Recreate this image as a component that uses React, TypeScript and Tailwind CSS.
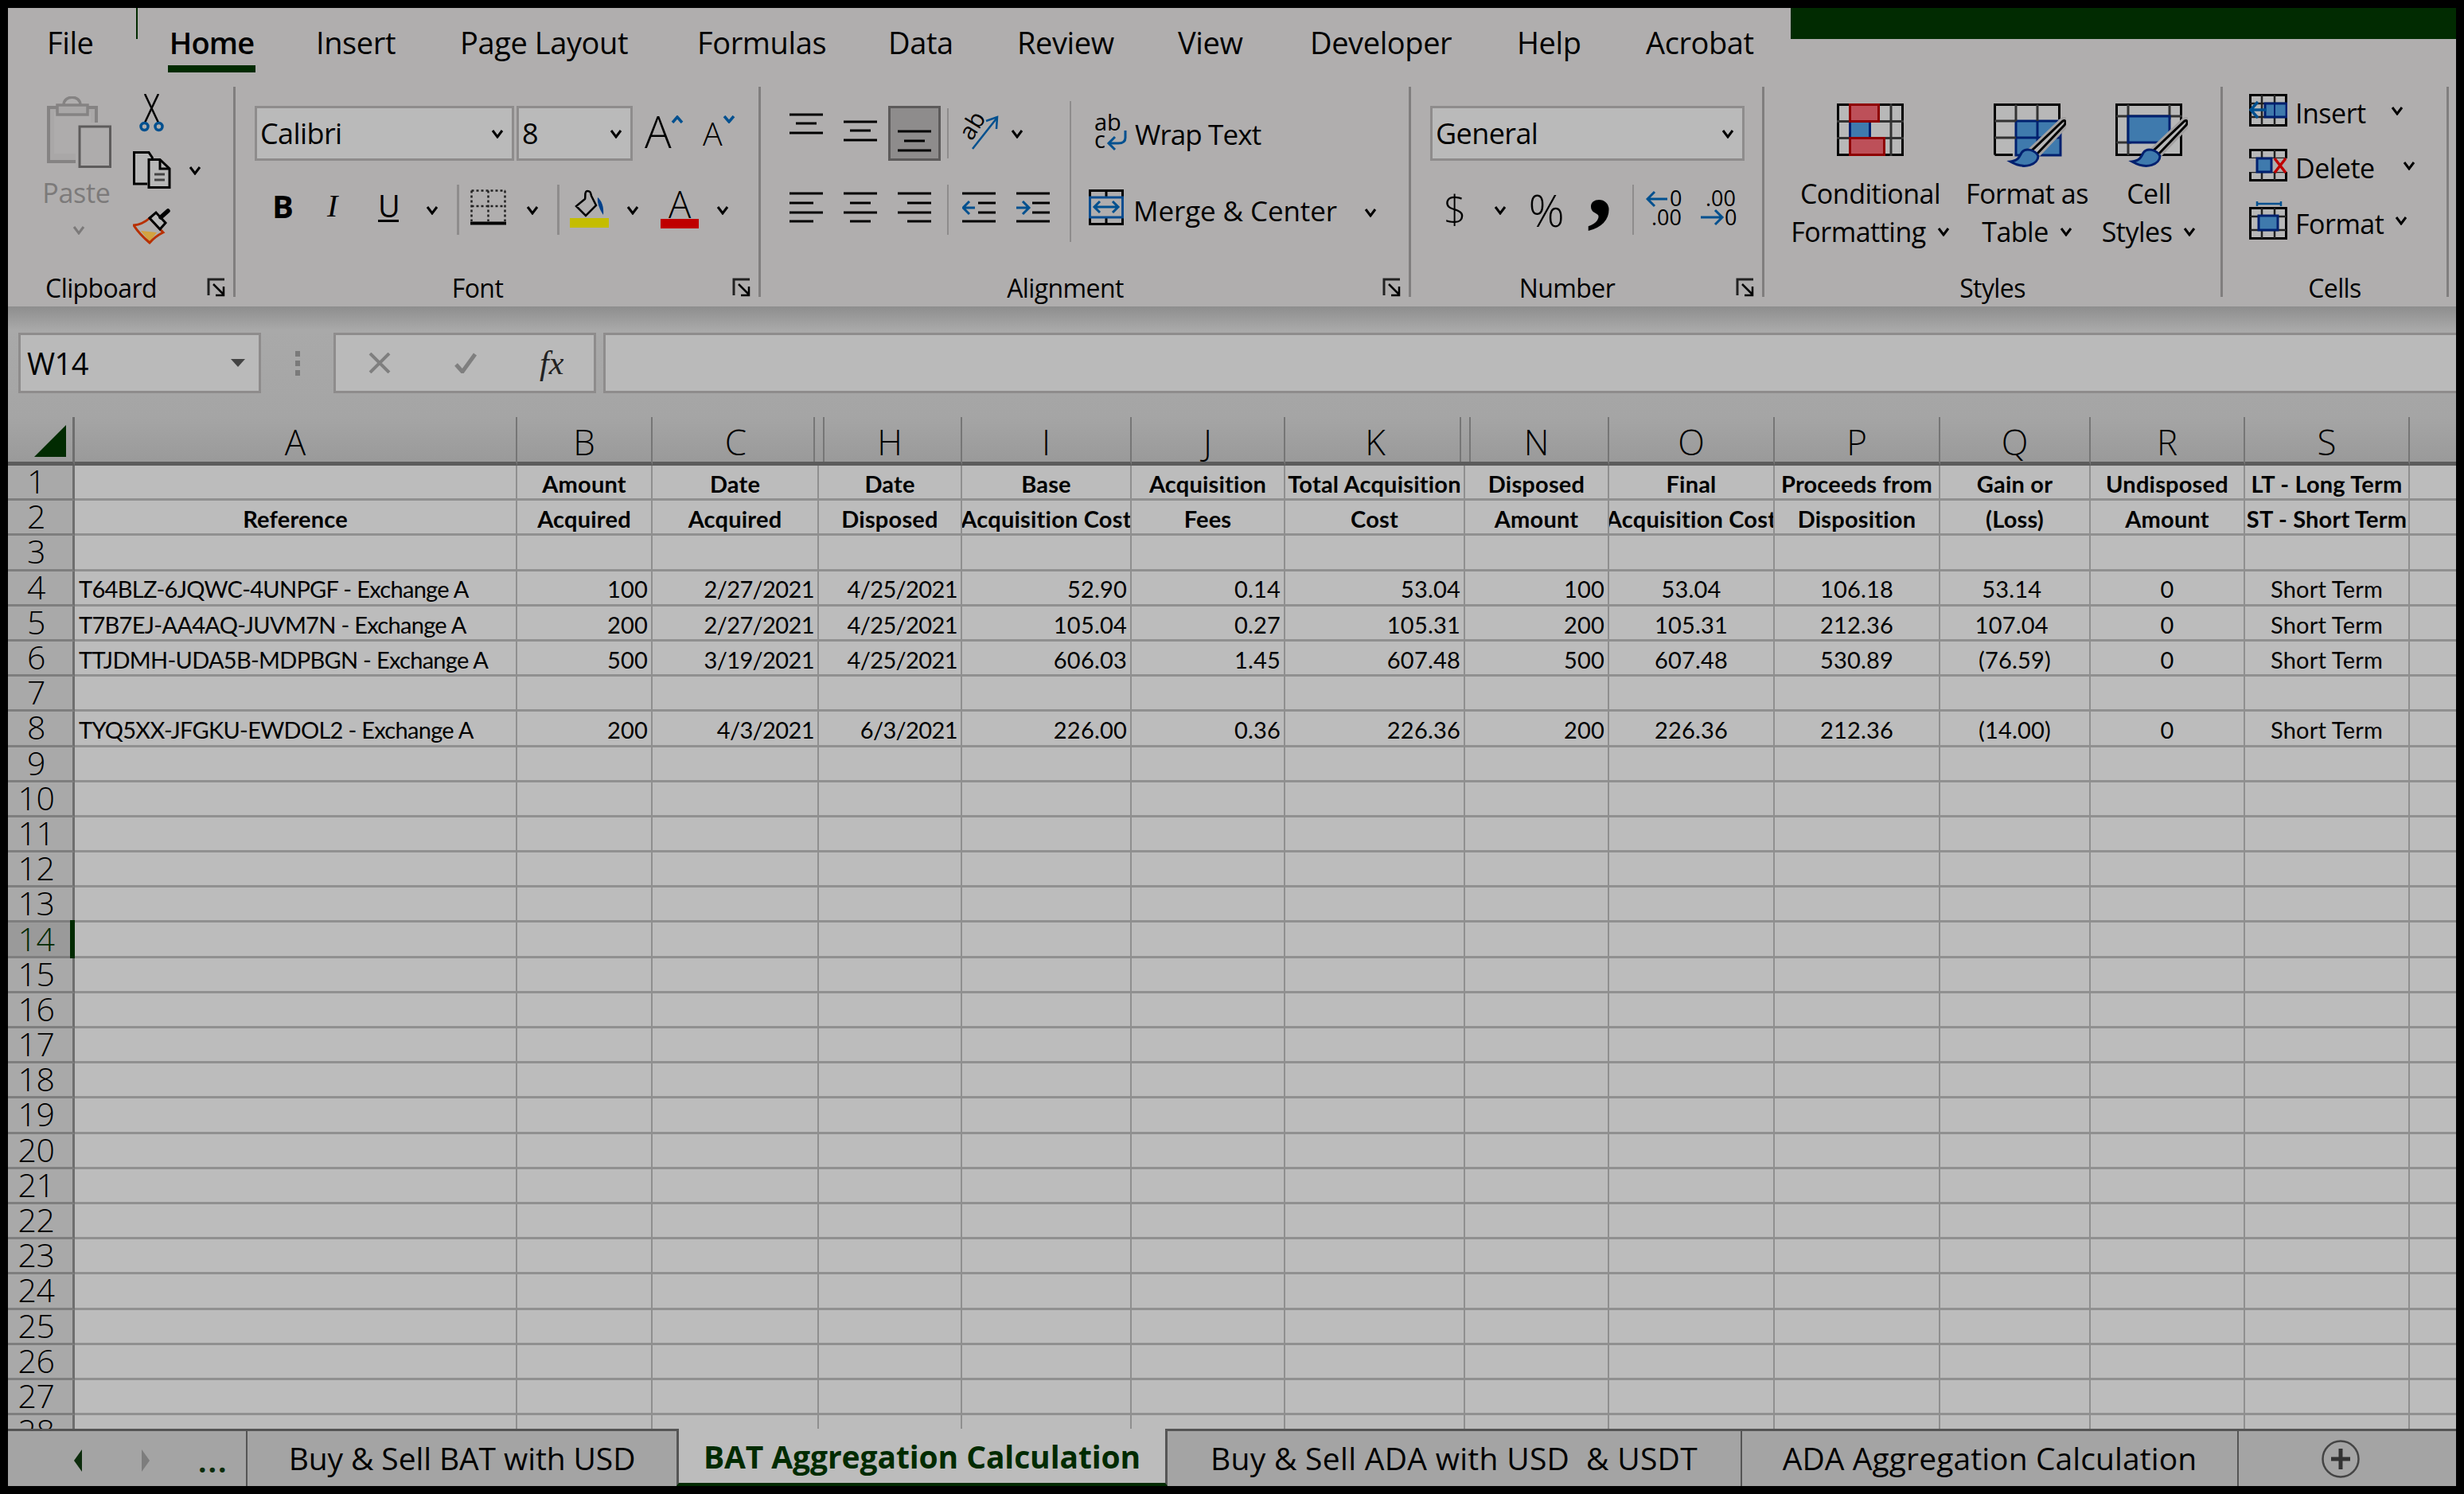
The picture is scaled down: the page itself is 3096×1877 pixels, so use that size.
import React from "react";

const ink = "#000";
const blue = "#00508f";
const navy = "#00206f";
const fillBlue = "#3f7aad";

function Chev({ color = "#000", className = "" }: { color?: string; className?: string }) {
  return (
    <svg width="16" height="12" viewBox="0 0 16 12" className={`shrink-0 ${className}`}>
      <path d="M2 2 L8 10 L14 2" fill="none" stroke={color} strokeWidth="3" />
    </svg>
  );
}

function Launcher() {
  return (
    <svg width="24" height="24" viewBox="0 0 24 24" className="shrink-0 mr-[9px] self-end">
      <path d="M2 22V2H22" fill="none" stroke="#222" strokeWidth="3" />
      <path d="M8 8L21 21M21 11V22H11" fill="none" stroke="#000" strokeWidth="2.5" />
    </svg>
  );
}

function Lines({ rows, color = ink, className = "" }: { rows: number[][]; color?: string; className?: string }) {
  return (
    <svg width="42" height="40" viewBox="0 0 42 40" className={`shrink-0 ${className}`}>
      {rows.map((r, i) => (
        <line key={i} x1={r[0]} x2={r[1]} y1={r[2]} y2={r[2]} stroke={color} strokeWidth="3" />
      ))}
    </svg>
  );
}

function PasteIcon() {
  return (
    <svg width="81" height="90" viewBox="0 0 81 90">
      <rect x="2" y="14" width="60" height="68" fill="#a9a7a7" stroke="#858383" strokeWidth="4" />
      <rect x="9" y="20" width="46" height="52" fill="#aeacac" />
      <path d="M21 11C21 -2 42 -2 42 11" fill="none" stroke="#858383" strokeWidth="3.5" />
      <rect x="13" y="11" width="38" height="12" fill="#a9a7a7" stroke="#858383" strokeWidth="3.5" />
      <rect x="36" y="33" width="45" height="57" fill="#aeacac" />
      <rect x="41" y="38" width="38.5" height="50.5" fill="#aeacac" stroke="#5e5c5c" strokeWidth="3" />
    </svg>
  );
}

function Scissors() {
  return (
    <svg width="31" height="48" viewBox="0 0 31 48">
      <path d="M7 0L24 36" stroke="#000" strokeWidth="2.5" />
      <path d="M24 0L7 36" stroke="#000" strokeWidth="2.5" />
      <circle cx="6.5" cy="41" r="4.5" fill="none" stroke={blue} strokeWidth="3.5" />
      <circle cx="24.5" cy="41" r="4.5" fill="none" stroke={blue} strokeWidth="3.5" />
    </svg>
  );
}

function CopyIcon() {
  return (
    <svg width="48" height="47" viewBox="0 0 48 47">
      <path d="M18 41H1.5V1.5H20L25 9" fill="#b8b8b8" stroke="#000" strokeWidth="3" />
      <path d="M20 10.5H34L46 22V45.5H20Z" fill="#b8b8b8" stroke="#000" strokeWidth="3" />
      <path d="M34 10V22H46" fill="none" stroke="#000" strokeWidth="3" />
      <path d="M27 29H40M27 36H40" stroke="#444" strokeWidth="3" />
    </svg>
  );
}

function PainterIcon() {
  return (
    <svg width="48" height="46" viewBox="0 0 48 46">
      <path d="M10 28L30 30L21 42Z" fill="#d3a23f" />
      <path d="M1 21Q12 20 21 12L38 30Q28 35 21 43Q8 32 1 21Z" fill="none" stroke="#b83000" strokeWidth="3" />
      <path d="M21 12L29 5L41 18L34 26Z" fill="#b8b8b8" stroke="#000" strokeWidth="3" />
      <path d="M35 11L44 3" stroke="#000" strokeWidth="5.5" strokeLinecap="round" />
    </svg>
  );
}

function BorderIcon() {
  return (
    <svg width="45" height="45" viewBox="0 0 45 45">
      <path d="M1.5 1.5H44M1.5 1.5V40M43.5 1.5V40M1.5 21H44M22.5 1.5V40" fill="none" stroke="#222" strokeWidth="2.5" strokeDasharray="3 3" />
      <path d="M0 42.5H45" stroke="#000" strokeWidth="4" />
    </svg>
  );
}

function FillIcon() {
  return (
    <svg width="49" height="48" viewBox="0 0 49 48">
      <path d="M22 2C18 2 20 8 19 12L8 21L20 33L33 20L27 8C26 4 26 2 22 2Z" fill="none" stroke="#000" strokeWidth="2.5" />
      <path d="M35 10C40 14 43 22 42 32C38 26 34 18 35 10Z" fill="#00408a" />
      <rect x="0" y="36" width="49" height="12" fill="#c4bd00" />
    </svg>
  );
}

function Orientation() {
  return (
    <svg width="50" height="46" viewBox="0 0 50 46" className="overflow-visible">
      <text x="15" y="35" fontSize="30" transform="rotate(-58 15 35)" fontFamily="Open Sans, sans-serif" fill="#000">ab</text>
      <path d="M16 44L46 6" stroke={blue} strokeWidth="2.5" />
      <path d="M33 9L47 4L46 19" fill="none" stroke={blue} strokeWidth="2.5" />
    </svg>
  );
}

function WrapIcon() {
  return (
    <svg width="42" height="47" viewBox="0 0 42 47">
      <text x="0" y="21" fontSize="29" fontFamily="Open Sans, sans-serif" fill="#000">ab</text>
      <text x="0" y="43" fontSize="29" fontFamily="Open Sans, sans-serif" fill="#000">c</text>
      <path d="M39 21V30Q39 37 30 37H19" fill="none" stroke={blue} strokeWidth="3" />
      <path d="M26 29L18 37L26 45" fill="none" stroke={blue} strokeWidth="3" />
    </svg>
  );
}

function MergeIcon() {
  return (
    <svg width="44" height="45" viewBox="0 0 44 45">
      <path d="M1.5 10V1.5H42.5V10M22 1.5V10M1.5 35V43.5H42.5V35M22 35V43.5" fill="none" stroke="#000" strokeWidth="3" />
      <rect x="1.5" y="10" width="41" height="25" fill="none" stroke="#0a4d90" strokeWidth="3" />
      <path d="M8 22H36M14 15L7 22L14 29M30 15L37 22L30 29" fill="none" stroke={blue} strokeWidth="3" />
    </svg>
  );
}

function DecimalUp() {
  return (
    <svg width="46" height="46" viewBox="0 0 46 46">
      <path d="M2 12H27M11 3L2 12L11 21" fill="none" stroke={blue} strokeWidth="3" />
      <text x="30" y="21" fontSize="27" fontFamily="Open Sans, sans-serif" fill="#000" textLength="15">0</text>
      <text x="7" y="45" fontSize="27" fontFamily="Open Sans, sans-serif" fill="#000" textLength="38">.00</text>
    </svg>
  );
}

function DecimalDown() {
  return (
    <svg width="46" height="46" viewBox="0 0 46 46">
      <text x="6" y="21" fontSize="27" fontFamily="Open Sans, sans-serif" fill="#000" textLength="38">.00</text>
      <path d="M0 35H27M18 26L27 35L18 44" fill="none" stroke={blue} strokeWidth="3" />
      <text x="30" y="45" fontSize="27" fontFamily="Open Sans, sans-serif" fill="#000" textLength="15">0</text>
    </svg>
  );
}

function CondIcon() {
  return (
    <svg width="84" height="66" viewBox="0 0 84 66">
      <rect x="1.5" y="1.5" width="81" height="63" fill="#b8b8b8" stroke="#000" strokeWidth="3" />
      <path d="M0 22.5H84M0 43.5H84M68 0V66" stroke="#333" strokeWidth="3" />
      <rect x="16.5" y="22.5" width="25" height="21" fill={fillBlue} stroke={navy} strokeWidth="3" />
      <rect x="16.5" y="1.5" width="36" height="21" fill="#bd5059" stroke="#8f0000" strokeWidth="3" />
      <rect x="16.5" y="43.5" width="43" height="21" fill="#bd5059" stroke="#8f0000" strokeWidth="3" />
    </svg>
  );
}

function Brush() {
  return (
    <>
      <path d="M87 22C90 20 91 24 89 27L52 66L46 61Z" fill="none" stroke="#a3a1a1" strokeWidth="9" />
      <path d="M87 22C90 20 91 24 89 27L52 66L46 61Z" fill="#b8b8b8" stroke="#000" strokeWidth="3" />
      <path d="M21 73C30 72 32 68 35 62C40 55 52 58 56 66C56 76 40 84 21 73Z" fill={fillBlue} stroke={navy} strokeWidth="3" />
    </>
  );
}

function TableIcon() {
  return (
    <svg width="91" height="81" viewBox="0 0 91 81" className="ml-[6px]">
      <rect x="3" y="3" width="78" height="60" fill="#b8b8b8" />
      <path d="M1.5 64.5V1.5H82.5V20" fill="none" stroke="#000" strokeWidth="3" />
      <path d="M1.5 64.5H24" stroke="#000" strokeWidth="3" />
      <rect x="28" y="22" width="56" height="43" fill={fillBlue} stroke={navy} strokeWidth="3" />
      <path d="M28 1V22M55 1V22M1 22H28M1 43H28" stroke="#333" strokeWidth="3" />
      <path d="M28 43H84M55 22V66" stroke={navy} strokeWidth="3" />
      <Brush />
    </svg>
  );
}

function CellStyleIcon() {
  return (
    <svg width="91" height="81" viewBox="0 0 91 81" className="ml-[6px]">
      <rect x="1.5" y="1.5" width="81" height="63" fill="#b8b8b8" stroke="#000" strokeWidth="3" />
      <path d="M16 1V65M68 1V20M1 16H84M1 49H20" stroke="#333" strokeWidth="3" />
      <rect x="16" y="16" width="52" height="33" fill={fillBlue} stroke={navy} strokeWidth="3" />
      <Brush />
    </svg>
  );
}

function CellGrid({ children }: { children?: React.ReactNode }) {
  return (
    <>
      <rect x="1.5" y="1.5" width="45" height="38" fill="#b8b8b8" stroke="#000" strokeWidth="3" />
      <path d="M16 1V40M32 1V40M1 12H47M1 29H47" stroke="#222" strokeWidth="2.5" />
      {children}
    </>
  );
}

function InsertCellsIcon() {
  return (
    <svg width="48" height="41" viewBox="0 0 48 41" className="shrink-0">
      <CellGrid />
      <rect x="20" y="12" width="27" height="17" fill={fillBlue} stroke={navy} strokeWidth="3" />
      <path d="M32 12V29" stroke={navy} strokeWidth="2" />
      <path d="M22 20H3M11 10L2 20L11 30" fill="none" stroke={blue} strokeWidth="3.5" />
    </svg>
  );
}

function DeleteCellsIcon() {
  return (
    <svg width="48" height="42" viewBox="0 0 48 42" className="shrink-0">
      <CellGrid />
      <rect x="0" y="12" width="48" height="17" fill="#b0aeae" />
      <rect x="10" y="12" width="18" height="17" fill={fillBlue} stroke={navy} strokeWidth="3" />
      <path d="M32 12L46 30M46 12L32 30" stroke="#bf0000" strokeWidth="3.5" />
    </svg>
  );
}

function FormatCellsIcon() {
  return (
    <svg width="48" height="48" viewBox="0 0 48 48" className="shrink-0">
      <path d="M10 3H40M10 0V6M40 0V6" fill="none" stroke={blue} strokeWidth="2.5" />
      <g transform="translate(0 7)">
        <CellGrid />
        <rect x="12" y="11" width="24" height="18" fill={fillBlue} stroke={navy} strokeWidth="3" />
      </g>
    </svg>
  );
}

function Combo({ width, text }: { width: string; text: string }) {
  return (
    <div className={`${width} h-[69px] flex items-center justify-between pl-[4px] pr-[10px] bg-[#bababa] border-[3px] border-[#8e8c8c] text-[36px] tracking-[-0.6px]`}>
      <span>{text}</span>
      <Chev />
    </div>
  );
}

function Group({ width, label, launcher, children }: { width: string; label: string; launcher?: boolean; children: React.ReactNode }) {
  return (
    <div className={`${width} h-[264px] flex flex-col shrink-0 border-r-[3px] border-[#807e7e]`}>
      <div className="h-[234px] flex items-start">{children}</div>
      <div className="h-[30px] flex items-start">
        <div className={`flex-1 text-center text-[32px] leading-[38px] tracking-[-0.6px] ${launcher ? "mr-[16px]" : ""}`}>{label}</div>
        {launcher && <Launcher />}
      </div>
    </div>
  );
}

const tabs = [
  { t: "Insert", w: "w-[181px]" },
  { t: "Page Layout", w: "w-[298px]" },
  { t: "Formulas", w: "w-[240px]" },
  { t: "Data", w: "w-[162px]" },
  { t: "Review", w: "w-[202px]" },
  { t: "View", w: "w-[166px]" },
  { t: "Developer", w: "w-[260px]" },
  { t: "Help", w: "w-[162px]" },
  { t: "Acrobat", w: "w-[182px]" },
];

type Col = { l: string; a: "l" | "r" | "c" };
const cols: Col[] = [
  { l: "A", a: "l" },
  { l: "B", a: "r" },
  { l: "C", a: "r" },
  { l: "H", a: "r" },
  { l: "I", a: "r" },
  { l: "J", a: "r" },
  { l: "K", a: "r" },
  { l: "N", a: "r" },
  { l: "O", a: "c" },
  { l: "P", a: "c" },
  { l: "Q", a: "c" },
  { l: "R", a: "c" },
  { l: "S", a: "c" },
  { l: "", a: "c" },
];

const head1 = ["", "Amount", "Date", "Date", "Base", "Acquisition", "Total Acquisition", "Disposed", "Final", "Proceeds from", "Gain or", "Undisposed", "LT - Long Term", ""];
const head2 = ["Reference", "Acquired", "Acquired", "Disposed", "Acquisition Cost", "Fees", "Cost", "Amount", "Acquisition Cost", "Disposition", "(Loss)", "Amount", "ST - Short Term", ""];

const data: Record<number, string[]> = {
  4: ["T64BLZ-6JQWC-4UNPGF - Exchange A", "100", "2/27/2021", "4/25/2021", "52.90", "0.14", "53.04", "100", "53.04", "106.18", "53.14\u00a0", "0", "Short Term", ""],
  5: ["T7B7EJ-AA4AQ-JUVM7N - Exchange A", "200", "2/27/2021", "4/25/2021", "105.04", "0.27", "105.31", "200", "105.31", "212.36", "107.04\u00a0", "0", "Short Term", ""],
  6: ["TTJDMH-UDA5B-MDPBGN - Exchange A", "500", "3/19/2021", "4/25/2021", "606.03", "1.45", "607.48", "500", "607.48", "530.89", "(76.59)", "0", "Short Term", ""],
  8: ["TYQ5XX-JFGKU-EWDOL2 - Exchange A", "200", "4/3/2021", "6/3/2021", "226.00", "0.36", "226.36", "200", "226.36", "212.36", "(14.00)", "0", "Short Term", ""],
};

const alignClass = {
  l: "justify-start pl-[5px]",
  r: "justify-end pr-[4px]",
  c: "justify-center",
};

function SheetRow({ n }: { n: number }) {
  const active = n === 14;
  const bold = n === 1 || n === 2;
  const values = n === 1 ? head1 : n === 2 ? head2 : data[n];
  return (
    <>
      <div className={`relative flex items-center justify-center pr-[10px] pb-[2px] border-r-[3px] border-b-[3px] border-r-[#6e6e6e] border-b-[#7e7e7e] font-['Open_Sans',sans-serif] font-light text-[41px] leading-none tracking-[-0.5px] ${active ? "bg-[#9a9a9a] text-[#022a02]" : "bg-[#a9a9a9] text-black"}`}>
        {n}
        {active && <span className="absolute -right-[3px] top-[-3px] bottom-[-3px] w-[6px] bg-[#012b01]" />}
      </div>
      {cols.map((c, i) => {
        const a = bold ? "c" : c.a;
        const track = bold ? "tracking-[0.2px] font-bold" : i === 0 ? "tracking-[-0.7px]" : i === 2 || i === 3 ? "tracking-[-0.6px]" : "tracking-[0.2px]";
        return (
          <div key={i} className={`flex items-center pt-[4px] whitespace-nowrap overflow-hidden border-b-[3px] border-b-[#909090] ${i < 13 ? "border-r-2 border-r-[#8f8f8f]" : ""} ${alignClass[a]} ${track}`}>
            {values ? values[i] : ""}
          </div>
        );
      })}
    </>
  );
}

const rowNums = Array.from({ length: 28 }, (_, i) => i + 1);

export default function App() {
  return (
    <div className="w-[3096px] h-[1877px] bg-black p-[10px] overflow-hidden font-['Open_Sans',sans-serif] text-black">
      <div className="h-[1857px] flex flex-col overflow-hidden">
        {/* ribbon tabs */}
        <div className="h-[99px] shrink-0 bg-[#b0aeae] flex items-start text-[38px] leading-[50px] tracking-[-0.4px]">
          <div className="w-[161px] pl-[49px] pt-[18px] shrink-0">File</div>
          <div className="w-[2px] h-[39px] bg-[#012b01] shrink-0" />
          <div className="ml-[38px] w-[186px] pt-[18px] shrink-0">
            <div className="w-[110px] pb-[4px] border-b-[9px] border-[#012b01] font-semibold text-center tracking-[-0.8px]">Home</div>
          </div>
          {tabs.map((t) => (
            <div key={t.t} className={`${t.w} pt-[18px] shrink-0`}>{t.t}</div>
          ))}
          <div className="flex-1 h-[39px] bg-[#012b01]" />
        </div>

        {/* ribbon */}
        <div className="h-[276px] shrink-0 bg-[#b0aeae] flex items-start">
          <Group width="w-[286px]" label="Clipboard" launcher>
            <div className="ml-[44px] w-[90px] flex flex-col items-center shrink-0 pt-[12px]">
              <PasteIcon />
              <div className="mt-[8px] -ml-[6px] text-[34px] leading-[46px] text-[#7c7a7a] tracking-[-0.3px]">Paste</div>
              <Chev color="#7c7a7a" className="mt-[18px]" />
            </div>
            <div className="ml-[23px] flex flex-col items-start shrink-0">
              <div className="ml-[8px] mt-[9px]"><Scissors /></div>
              <div className="mt-[24px] flex items-center"><CopyIcon /><Chev className="ml-[22px]" /></div>
              <div className="mt-[25px]"><PainterIcon /></div>
            </div>
          </Group>

          <Group width="w-[660px]" label="Font" launcher>
            <div className="flex flex-col">
              <div className="mt-[24px] ml-[24px] flex items-start">
                <Combo width="w-[326px]" text="Calibri" />
                <div className="ml-[3px]"><Combo width="w-[146px]" text="8" /></div>
                <div className="ml-[15px] w-[46px] flex items-start">
                  <span className="text-[56px] leading-[62px] font-light">A</span>
                  <svg width="16" height="10" viewBox="0 0 16 10" className="mt-[12px] -ml-[1px] shrink-0"><path d="M2 9L8 2L14 9" fill="none" stroke={blue} strokeWidth="3.5" /></svg>
                </div>
                <div className="ml-[27px] w-[40px] flex items-start">
                  <span className="text-[41px] leading-[62px] font-light mt-[3px]">A</span>
                  <svg width="16" height="10" viewBox="0 0 16 10" className="mt-[12px] shrink-0"><path d="M2 1L8 8L14 1" fill="none" stroke={blue} strokeWidth="3.5" /></svg>
                </div>
              </div>
              <div className="mt-[30px] h-[63px] flex items-start">
                <div className="ml-[46px] w-[23px] text-[40px] leading-[54px] font-bold">B</div>
                <div className="ml-[46px] w-[20px] text-[40px] leading-[54px] italic font-['Liberation_Serif',serif]">I</div>
                <div className="ml-[44px] w-[26px] h-[47px] text-[38px] leading-[52px] text-center border-b-[3px] border-black">U</div>
                <Chev className="ml-[34px] mt-[26px]" />
                <div className="ml-[23px] w-[3px] h-[63px] bg-[#8e8c8c]" />
                <div className="ml-[14px] mt-[6px]"><BorderIcon /></div>
                <Chev className="ml-[25px] mt-[26px]" />
                <div className="ml-[23px] w-[3px] h-[63px] bg-[#8e8c8c]" />
                <div className="ml-[13px] mt-[6px]"><FillIcon /></div>
                <Chev className="ml-[22px] mt-[26px]" />
                <div className="ml-[27px] mt-[6px] w-[48px] flex flex-col items-center">
                  <span className="text-[47px] leading-[37px] font-light">A</span>
                  <div className="w-[48px] h-[12px] bg-[#bf0000]" />
                </div>
                <Chev className="ml-[22px] mt-[26px]" />
              </div>
            </div>
          </Group>

          <Group width="w-[817px]" label="Alignment" launcher>
            <div className="w-[388px] shrink-0 flex flex-col">
              <div className="mt-[24px] h-[69px] flex items-start">
                <Lines className="ml-[36px] mt-[9px]" rows={[[0, 42, 2], [8, 34, 13], [0, 42, 25]]} />
                <Lines className="ml-[26px] mt-[18px]" rows={[[0, 42, 2], [8, 34, 13], [0, 42, 25]]} />
                <div className="ml-[14px] w-[66px] h-[69px] pl-[9px] pt-[27px] bg-[#8e8c8c] border-[3px] border-[#5c5a5a]">
                  <Lines rows={[[0, 42, 2], [8, 34, 14], [0, 42, 26]]} />
                </div>
                <div className="ml-[8px] mt-[3px] w-[2px] h-[63px] bg-[#8e8c8c]" />
                <div className="ml-[14px] mt-[10px]"><Orientation /></div>
                <Chev className="ml-[14px] mt-[29px]" />
              </div>
              <div className="mt-[30px] h-[63px] flex items-start">
                <Lines className="ml-[36px] mt-[9px]" rows={[[0, 42, 2], [0, 30, 14], [0, 42, 26], [0, 30, 37]]} />
                <Lines className="ml-[26px] mt-[9px]" rows={[[0, 42, 2], [8, 34, 14], [0, 42, 26], [8, 34, 37]]} />
                <Lines className="ml-[26px] mt-[9px]" rows={[[0, 42, 2], [12, 42, 14], [0, 42, 26], [12, 42, 37]]} />
                <div className="ml-[20px] w-[2px] h-[63px] bg-[#8e8c8c]" />
                <svg width="42" height="40" viewBox="0 0 42 40" className="ml-[17px] mt-[9px] shrink-0">
                  <path d="M0 2H42M20 14H42M20 26H42M0 37H42" stroke="#000" strokeWidth="3" />
                  <path d="M2 20H16M9 12L1 20L9 28" fill="none" stroke={blue} strokeWidth="3" />
                </svg>
                <svg width="42" height="40" viewBox="0 0 42 40" className="ml-[26px] mt-[9px] shrink-0">
                  <path d="M0 2H42M20 14H42M20 26H42M0 37H42" stroke="#000" strokeWidth="3" />
                  <path d="M0 20H15M8 12L16 20L8 28" fill="none" stroke={blue} strokeWidth="3" />
                </svg>
              </div>
            </div>
            <div className="mt-[18px] w-[2px] h-[177px] bg-[#8e8c8c] shrink-0" />
            <div className="flex flex-col">
              <div className="mt-[34px] ml-[29px] h-[47px] flex items-center">
                <WrapIcon />
                <span className="ml-[9px] mt-[4px] text-[35px] leading-[46px] tracking-[-0.9px]">Wrap Text</span>
              </div>
              <div className="mt-[48px] ml-[22px] h-[45px] flex items-center">
                <MergeIcon />
                <span className="ml-[12px] w-[290px] mt-[8px] text-[35px] leading-[46px] tracking-[-0.1px]">Merge &amp; Center</span>
                <Chev className="mt-[12px]" />
              </div>
            </div>
          </Group>

          <Group width="w-[444px]" label="Number" launcher>
            <div className="flex flex-col">
              <div className="mt-[24px] ml-[24px]"><Combo width="w-[395px]" text="General" /></div>
              <div className="mt-[30px] h-[63px] flex items-start">
                <div className="ml-[41px] w-[22px] text-[50px] leading-[60px] font-light text-center">$</div>
                <Chev className="ml-[41px] mt-[26px]" />
                <div className="ml-[27px] w-[43px] text-[56px] leading-[62px] font-light text-center tracking-[-3px]">%</div>
                <div className="ml-[31px] -mt-[44px] w-[31px] h-[107px] text-[130px] leading-[76px] font-bold font-['Liberation_Serif',serif] text-left">,</div>
                <div className="ml-[26px] w-[2px] h-[63px] bg-[#8e8c8c]" />
                <div className="ml-[15px] mt-[6px]"><DecimalUp /></div>
                <div className="ml-[23px] mt-[6px]"><DecimalDown /></div>
              </div>
            </div>
          </Group>

          <Group width="w-[576px]" label="Styles">
            <div className="ml-[23px] w-[220px] shrink-0 flex flex-col items-center pt-[18px] text-[34px] leading-[48px] tracking-[-0.5px]">
              <div className="h-[92px] pt-[3px]"><CondIcon /></div>
              <div>Conditional</div>
              <div className="flex items-center">Formatting<Chev className="ml-[14px]" /></div>
            </div>
            <div className="w-[174px] shrink-0 flex flex-col items-center pt-[18px] text-[34px] leading-[48px] tracking-[-0.5px]">
              <div className="h-[92px] pt-[3px]"><TableIcon /></div>
              <div>Format as</div>
              <div className="flex items-center">Table<Chev className="ml-[14px]" /></div>
            </div>
            <div className="w-[132px] shrink-0 flex flex-col items-center pt-[18px] text-[34px] leading-[48px] tracking-[-0.5px]">
              <div className="h-[92px] pt-[3px]"><CellStyleIcon /></div>
              <div>Cell</div>
              <div className="flex items-center">Styles<Chev className="ml-[14px]" /></div>
            </div>
          </Group>

          <Group width="w-[284px]" label="Cells">
            <div className="pl-[33px] flex flex-col text-[34px] leading-[46px] tracking-[-0.5px]">
              <div className="mt-[9px] h-[41px] flex items-center">
                <InsertCellsIcon />
                <span className="ml-[10px] w-[120px] mt-[6px]">Insert</span>
                <Chev />
              </div>
              <div className="mt-[28px] h-[42px] flex items-center">
                <DeleteCellsIcon />
                <span className="ml-[10px] w-[135px] mt-[6px]">Delete</span>
                <Chev />
              </div>
              <div className="mt-[24px] h-[48px] flex items-center">
                <FormatCellsIcon />
                <span className="ml-[10px] w-[125px] mt-[8px]">Format</span>
                <Chev />
              </div>
            </div>
          </Group>
        </div>

        {/* formula bar */}
        <div className="h-[139px] shrink-0 bg-[linear-gradient(#8e8e8e_0,#a9a9a9_30px,#a5a5a5_100%)] pl-[13px] pt-[33px] flex items-start">
          <div className="w-[305px] h-[76px] flex items-center justify-between pl-[8px] pr-[17px] bg-[#bababa] border-[3px] border-[#8e8c8c] text-[38px] tracking-[-0.5px]">
            <span>W14</span>
            <svg width="18" height="10" viewBox="0 0 18 10"><path d="M0 0H18L9 10Z" fill="#444" /></svg>
          </div>
          <div className="ml-[43px] mt-[23px] w-[6px] flex flex-col gap-[5px]">
            <div className="h-[7px] bg-[#7a7a7a]" />
            <div className="h-[7px] bg-[#7a7a7a]" />
            <div className="h-[7px] bg-[#7a7a7a]" />
          </div>
          <div className="ml-[42px] w-[330px] h-[76px] flex items-center bg-[#bababa] border-[3px] border-[#8e8c8c]">
            <svg width="30" height="26" viewBox="0 0 30 26" className="ml-[40px]"><path d="M3 1L27 25M27 1L3 25" stroke="#7f7f7f" strokeWidth="4" /></svg>
            <svg width="30" height="26" viewBox="0 0 30 26" className="ml-[78px]"><path d="M3 15L11 24L27 2" fill="none" stroke="#7f7f7f" strokeWidth="5" /></svg>
            <span className="ml-[78px] text-[42px] italic font-['Liberation_Serif',serif] text-[#222]">fx</span>
          </div>
          <div className="ml-[9px] flex-1 h-[76px] bg-[#bababa] border-[3px] border-r-0 border-[#8e8c8c]" />
        </div>

        {/* sheet */}
        <div className="flex-1 min-h-0 overflow-hidden bg-[#bcbcbc] font-['Lato',sans-serif] text-[29px]">
          <div className="grid grid-cols-[84px_556px_170px_209px_180px_213px_193px_226px_181px_208px_208px_189px_194px_207px_58px] grid-rows-[61px] auto-rows-[44.2px]">
            <div className="flex items-end justify-end pr-[8px] pb-[6px] border-r-[3px] border-b-[5px] border-r-[#6e6e6e] border-b-[#5c5c5c] bg-[linear-gradient(#a5a5a5,#9a9a9a)]">
              <svg width="40" height="40" viewBox="0 0 40 40"><path d="M40 0V40H0Z" fill="#012b01" /></svg>
            </div>
            {cols.map((c, i) => (
              <div key={i} className={`relative flex items-center justify-center pt-[6px] border-b-[5px] border-b-[#5c5c5c] bg-[linear-gradient(#a5a5a5,#9a9a9a)] font-['Open_Sans',sans-serif] font-light text-[44px] leading-none ${i < 13 && c.l !== "C" && c.l !== "K" ? "border-r-2 border-r-[#767676]" : ""}`}>
                {c.l}
                {(c.l === "C" || c.l === "K") && <span className="absolute right-[5px] top-0 bottom-0 w-[2px] bg-[#767676]" />}
                {(c.l === "H" || c.l === "N") && <span className="absolute left-[5px] top-0 bottom-0 w-[2px] bg-[#767676]" />}
              </div>
            ))}
            {rowNums.map((n) => (
              <SheetRow key={n} n={n} />
            ))}
          </div>
        </div>

        {/* sheet tabs */}
        <div className="h-[72px] shrink-0 flex items-stretch bg-[#a4a4a4] text-[39px] leading-none tracking-[-0.1px]">
          <div className="w-[299px] shrink-0 border-t-[3px] border-[#555] flex items-center">
            <svg width="10" height="28" viewBox="0 0 10 28" className="ml-[83px] mt-[4px]"><path d="M10 0V28L0 14Z" fill="#0c2c0c" /></svg>
            <svg width="10" height="28" viewBox="0 0 10 28" className="ml-[75px] mt-[4px]"><path d="M0 0V28L10 14Z" fill="#7d7d7d" /></svg>
            <span className="ml-[61px] mt-[6px] font-bold text-[#0c2c0c] tracking-[2px] text-[37px]">...</span>
          </div>
          <div className="w-[541px] shrink-0 border-t-[3px] border-l-2 border-[#555] flex items-center justify-center pb-[2px]">Buy &amp; Sell BAT with USD</div>
          <div className="w-[617px] shrink-0 bg-[#bcbcbc] border-x-[3px] border-x-[#555] border-b-[4px] border-b-[#012b01] flex items-center justify-center font-bold text-[#012b01]">BAT Aggregation Calculation</div>
          <div className="w-[720px] shrink-0 border-t-[3px] border-[#555] flex items-center justify-center pb-[2px] whitespace-pre tracking-[0.3px]">Buy &amp; Sell ADA with USD  &amp; USDT</div>
          <div className="w-[624px] shrink-0 border-t-[3px] border-l-2 border-[#555] flex items-center justify-center pb-[2px] tracking-[0.1px]">ADA Aggregation Calculation</div>
          <div className="flex-1 border-t-[3px] border-l-2 border-[#555] flex items-center pl-[104px]">
            <svg width="48" height="48" viewBox="0 0 48 48">
              <circle cx="24" cy="24" r="22.5" fill="none" stroke="#444" strokeWidth="2.5" />
              <path d="M24 11V37M12 24H36" stroke="#333" strokeWidth="5" />
            </svg>
          </div>
        </div>
      </div>
    </div>
  );
}
